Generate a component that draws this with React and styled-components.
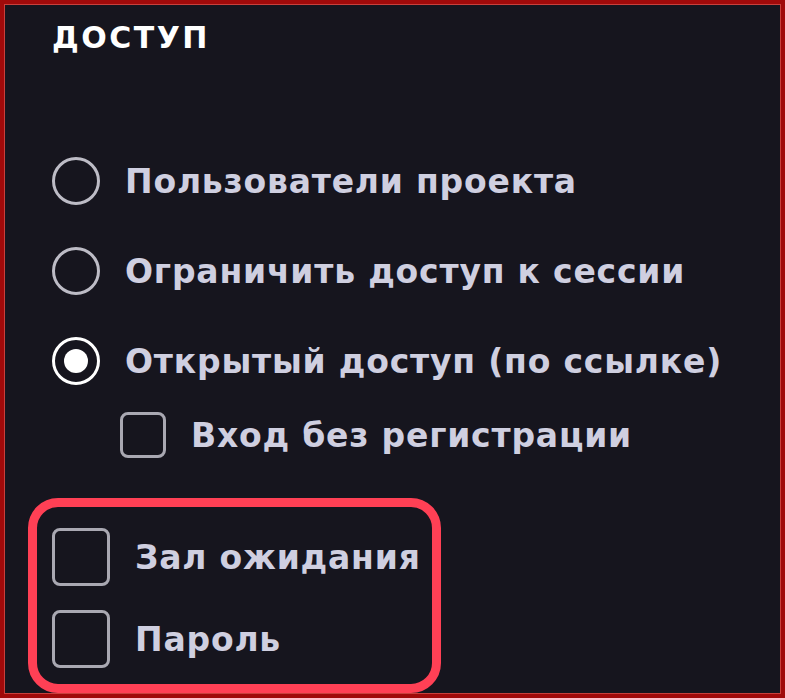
import React from "react";
import styled, { createGlobalStyle } from "styled-components";

const Global = createGlobalStyle`
  html, body {
    margin: 0;
    padding: 0;
    background: #16151e;
  }
`;

const Frame = styled.div`
  box-sizing: border-box;
  width: 785px;
  height: 698px;
  border: 4px solid #a00a0a;
  box-shadow: inset 0 0 0 1px #c8403c;
  background: #16151e;
  padding: 14px 0 0 48px;
  display: flex;
  flex-direction: column;
  font-family: "DejaVu Sans", "Noto Sans", sans-serif;
  font-weight: 700;
`;

const Heading = styled.h2`
  margin: 0;
  color: #ffffff;
  font-size: 30px;
  line-height: 40px;
  letter-spacing: 2.5px;
  font-weight: 700;
`;

const Options = styled.div`
  display: flex;
  flex-direction: column;
  margin-top: 100px;
  gap: 44px;
`;

const Row = styled.label`
  display: flex;
  align-items: center;
  gap: ${(p) => p.$gap || 25}px;
  height: 46px;
  margin-left: ${(p) => p.$indent || 0}px;
  color: #cfcfe0;
  font-size: 33px;
  letter-spacing: 0.8px;
  white-space: nowrap;
`;

const Radio = styled.span`
  box-sizing: border-box;
  width: 48px;
  height: 48px;
  border-radius: 50%;
  border: 3px solid ${(p) => (p.$on ? "#ffffff" : "#bdbcc6")};
  display: flex;
  align-items: center;
  justify-content: center;
  flex: none;

  &::after {
    content: "";
    display: ${(p) => (p.$on ? "block" : "none")};
    width: 24px;
    height: 24px;
    border-radius: 50%;
    background: #ffffff;
  }
`;

const Box = styled.span`
  box-sizing: border-box;
  width: ${(p) => p.$size}px;
  height: ${(p) => p.$size}px;
  border: 3px solid #a9a8b2;
  border-radius: 8px;
  flex: none;
`;

const Highlight = styled.div`
  box-sizing: border-box;
  width: 413px;
  margin: 40px 0 0 -24px;
  border: 9px solid #ff4055;
  border-radius: 30px;
  padding: 21px 0 16px 15px;
  display: flex;
  flex-direction: column;
  gap: 24px;
`;

const BigRow = styled(Row)`
  height: 58px;
`;

export default function App() {
  return (
    <>
      <Global />
      <Frame>
        <Heading>ДОСТУП</Heading>
        <Options>
          <Row>
            <Radio />
            Пользователи проекта
          </Row>
          <Row>
            <Radio />
            Ограничить доступ к сессии
          </Row>
          <Row>
            <Radio $on />
            Открытый доступ (по ссылке)
          </Row>
        </Options>
        <Row $indent={68} $gap={25} style={{ marginTop: 28 }}>
          <Box $size={46} />
          Вход без регистрации
        </Row>
        <Highlight>
          <BigRow>
            <Box $size={58} />
            Зал ожидания
          </BigRow>
          <BigRow>
            <Box $size={58} />
            Пароль
          </BigRow>
        </Highlight>
      </Frame>
    </>
  );
}
